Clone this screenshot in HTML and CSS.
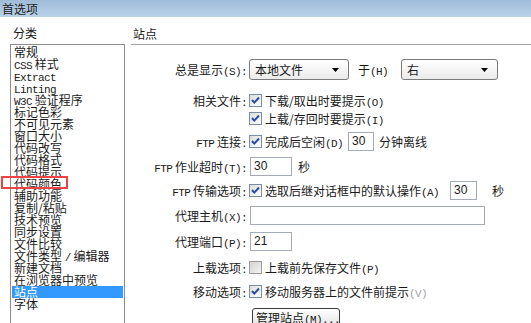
FILE: index.html
```html
<!DOCTYPE html>
<html lang="zh-CN">
<head>
    <meta charset="UTF-8">
    <title>首选项</title>
    <link rel="stylesheet" href="styles.css">
</head>
<body>

<div class="titlebar">首选项</div>

<div class="main">
    <div class="side">
        <div class="side-title">分类</div>
        <ul class="cats">
            <li>常规</li>
            <li><span class="en">CSS</span> 样式</li>
            <li><span class="en">Extract</span></li>
            <li><span class="en">Linting</span></li>
            <li><span class="en">W3C</span> 验证程序</li>
            <li>标记色彩</li>
            <li>不可见元素</li>
            <li>窗口大小</li>
            <li>代码改写</li>
            <li>代码格式</li>
            <li>代码提示</li>
            <li>代码颜色</li>
            <li>辅助功能</li>
            <li>复制/粘贴</li>
            <li>技术预览</li>
            <li>同步设置</li>
            <li>文件比较</li>
            <li>文件类型 <span class="en">/</span> 编辑器</li>
            <li>新建文档</li>
            <li>在浏览器中预览</li>
            <li class="selected">站点</li>
            <li>字体</li>
        </ul>
        <div class="mark"></div>
    </div>

    <div class="panel">
        <div class="panel-title">站点</div>

        <div class="form">
            <div class="row r1">
                <label class="lbl">总是显示<span class="en">(S):</span></label>
                <div class="ctl">
                    <div class="select wide">本地文件
                        <svg class="arrow" width="7" height="4" viewBox="0 0 7 4"><polygon points="0,0 7,0 3.5,4" fill="#000"/></svg>
                    </div>
                    <span class="between">于<span class="en">(H)</span></span>
                    <div class="select narrow">右
                        <svg class="arrow" width="7" height="4" viewBox="0 0 7 4"><polygon points="0,0 7,0 3.5,4" fill="#000"/></svg>
                    </div>
                </div>
            </div>

            <div class="row r2">
                <label class="lbl">相关文件<span class="en">:</span></label>
                <div class="ctl">
                    <span class="cb"><svg width="11" height="11" viewBox="0 0 11 11"><polyline points="2,5 4.3,7.6 9,2.5" fill="none" stroke="#2a4aa8" stroke-width="2"/></svg></span>
                    <span>下载/取出时要提示<span class="en">(O)</span></span>
                </div>
            </div>

            <div class="row r3">
                <label class="lbl"></label>
                <div class="ctl">
                    <span class="cb"><svg width="11" height="11" viewBox="0 0 11 11"><polyline points="2,5 4.3,7.6 9,2.5" fill="none" stroke="#2a4aa8" stroke-width="2"/></svg></span>
                    <span>上载/存回时要提示<span class="en">(I)</span></span>
                </div>
            </div>

            <div class="row r4">
                <label class="lbl"><span class="en">FTP</span> 连接<span class="en">:</span></label>
                <div class="ctl">
                    <span class="cb"><svg width="11" height="11" viewBox="0 0 11 11"><polyline points="2,5 4.3,7.6 9,2.5" fill="none" stroke="#2a4aa8" stroke-width="2"/></svg></span>
                    <span>完成后空闲<span class="en">(D)</span></span>
                    <span class="field idle">30</span>
                    <span>分钟离线</span>
                </div>
            </div>

            <div class="row r5">
                <label class="lbl"><span class="en">FTP</span> 作业超时<span class="en">(T):</span></label>
                <div class="ctl">
                    <span class="field short">30</span>
                    <span class="unit">秒</span>
                </div>
            </div>

            <div class="row r6">
                <label class="lbl"><span class="en">FTP</span> 传输选项<span class="en">:</span></label>
                <div class="ctl">
                    <span class="cb"><svg width="11" height="11" viewBox="0 0 11 11"><polyline points="2,5 4.3,7.6 9,2.5" fill="none" stroke="#2a4aa8" stroke-width="2"/></svg></span>
                    <span>选取后继对话框中的默认操作<span class="en">(A)</span></span>
                    <span class="field secs">30</span>
                    <span class="unit far">秒</span>
                </div>
            </div>

            <div class="row r7">
                <label class="lbl">代理主机<span class="en">(X):</span></label>
                <div class="ctl">
                    <span class="field host"></span>
                </div>
            </div>

            <div class="row r8">
                <label class="lbl">代理端口<span class="en">(P):</span></label>
                <div class="ctl">
                    <span class="field short">21</span>
                </div>
            </div>

            <div class="row r9">
                <label class="lbl">上载选项<span class="en">:</span></label>
                <div class="ctl">
                    <span class="cb off"></span>
                    <span>上载前先保存文件<span class="en">(P)</span></span>
                </div>
            </div>

            <div class="row r10">
                <label class="lbl">移动选项<span class="en">:</span></label>
                <div class="ctl">
                    <span class="cb"><svg width="11" height="11" viewBox="0 0 11 11"><polyline points="2,5 4.3,7.6 9,2.5" fill="none" stroke="#2a4aa8" stroke-width="2"/></svg></span>
                    <span>移动服务器上的文件前提示<span class="en faded">(V)</span></span>
                </div>
            </div>

            <div class="row r11">
                <label class="lbl"></label>
                <div class="ctl">
                    <span class="btn">管理站点<span class="en">(M)...</span></span>
                </div>
            </div>
        </div>
    </div>
</div>

</body>
</html>
```

FILE: styles.css
```css
:root {
    --text: #1a1a1a;
    --frame: #8c8c8c;
    --field-border: #a5acb5;
    --select-blue: #3399ff;
}

html, body {
    margin: 0;
    padding: 0;
    width: 531px;
    height: 323px;
    overflow: hidden;
    background: #fff;
    color: var(--text);
    font-family: "Noto Sans CJK SC", "Liberation Sans", sans-serif;
    font-size: 12px;
}

.en {
    font-family: "Liberation Mono", monospace;
    font-size: 11px;
    letter-spacing: -0.6px;
}

.titlebar {
    height: 17px;
    line-height: 17px;
    padding-left: 2px;
    background: linear-gradient(#9fbbd8, #bad2ea);
    color: #222;
}

.main {
    display: flex;
    height: 306px;
    overflow: hidden;
}

/* category list */
.side {
    position: relative;
    width: 121px;
    padding-left: 10px;
    flex-shrink: 0;
}

.side-title {
    margin-top: 10px;
    padding-left: 3px;
    line-height: 12px;
}

.cats {
    list-style: none;
    margin: 5px 0 0 0;
    padding: 1px 1px 0 1px;
    width: 111px;
    height: 280px;
    border: 1px solid var(--frame);
    border-bottom: none;
    overflow: hidden;
}

.cats li {
    height: 12px;
    line-height: 12px;
    padding-left: 2px;
    white-space: nowrap;
}

.cats li.selected {
    background: var(--select-blue);
    color: #fff;
}

.mark {
    position: absolute;
    left: 1px;
    top: 159px;
    width: 63px;
    height: 9px;
    border: 2px solid #ee4343;
}

/* settings panel */
.panel {
    flex: 1;
}

.panel-title {
    margin-top: 11px;
    padding: 0 0 4px 2px;
    line-height: 12px;
    border-bottom: 1px solid #a0a0a0;
}

.form {
    display: flex;
    flex-direction: column;
    padding-top: 14px;
}

.row {
    display: flex;
    align-items: center;
    height: 20px;
}

.r1 { height: 21px; }
.r2 { height: 18px; margin-top: 11px; }
.r3 { height: 18px; }
.r4 { margin-top: 4px; }
.r5 { margin-top: 5px; }
.r6 { margin-top: 4px; }
.r7 { margin-top: 5px; }
.r8 { margin-top: 6px; }
.r9 { height: 18px; margin-top: 7px; }
.r10 { height: 18px; margin-top: 6px; }
.r11 { height: 16px; margin-top: 8px; align-items: flex-start; overflow: hidden; }

.lbl {
    width: 116px;
    text-align: right;
    white-space: nowrap;
}

.ctl {
    display: flex;
    align-items: center;
    margin-left: 2px;
    white-space: nowrap;
}

/* checkboxes */
.cb {
    display: inline-flex;
    align-items: center;
    justify-content: center;
    width: 11px;
    height: 11px;
    margin-right: 3px;
    border: 1px solid #7b8ea8;
    background: linear-gradient(135deg, #dcdcd7, #fff);
}

.cb.off {
    border-color: #9a9a9a;
    background: linear-gradient(135deg, #d2d2d2, #f4f4f4);
}

/* drop-downs */
.select {
    position: relative;
    box-sizing: border-box;
    height: 21px;
    line-height: 19px;
    padding-left: 5px;
    border: 1px solid #7a7a7a;
    border-radius: 3px;
    background: linear-gradient(#fff, #ebebeb);
}

.select.wide {
    width: 100px;
}

.select.narrow {
    width: 97px;
}

.arrow {
    position: absolute;
    right: 9px;
    top: 8px;
}

.between {
    margin: 0 13px 0 9px;
}

/* text fields */
.field {
    box-sizing: border-box;
    height: 19px;
    line-height: 17px;
    padding-left: 3px;
    border: 1px solid var(--field-border);
    font-family: "Liberation Sans", sans-serif;
    font-size: 12px;
}

.field.idle {
    width: 26px;
    margin: 0 5px 0 5px;
}

.field.short {
    width: 42px;
    margin-left: 1px;
}

.field.secs {
    width: 27px;
    margin-left: 11px;
}

.field.host {
    width: 235px;
    margin-left: 1px;
}

.unit {
    margin-left: 6px;
}

.unit.far {
    margin-left: 15px;
}

.faded {
    color: #666;
    opacity: 0.6;
}

.btn {
    box-sizing: border-box;
    display: inline-block;
    width: 88px;
    height: 20px;
    line-height: 17px;
    margin-left: 3px;
    padding-left: 3px;
    border: 1px solid #3c3c3c;
    border-radius: 3px;
    background: linear-gradient(#fff, #e3e3e3);
}
```
